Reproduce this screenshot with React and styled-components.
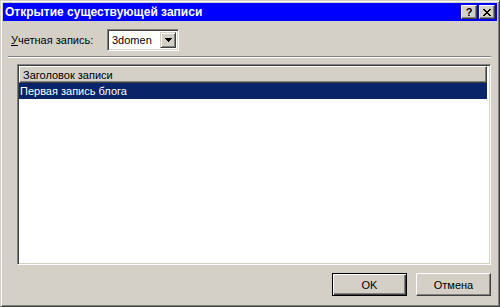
import React from "react";
import styled, { createGlobalStyle } from "styled-components";

const Global = createGlobalStyle`
  html, body { margin: 0; padding: 0; background: #D4D0C8; }
  * { box-sizing: border-box; }
  body { font-family: "Liberation Sans", Arial, sans-serif; font-size: 11px; color: #000; }
`;

const Window = styled.div`
  width: 500px;
  height: 307px;
  background: #D4D0C8;
  border: 1px solid;
  border-color: #D4D0C8 #404040 #404040 #D4D0C8;
  box-shadow: inset 1px 1px #fff, inset -1px -1px #808080;
  padding: 2px;
  display: flex;
  flex-direction: column;
`;

const TitleBar = styled.div`
  height: 18px;
  background: #0000ff;
  display: flex;
  align-items: center;
  padding: 0 2px 0 2px;
  flex-shrink: 0;
`;

const TitleText = styled.div`
  flex: 1;
  color: #fff;
  font-weight: bold;
  font-size: 12px;
  white-space: nowrap;
`;

const CaptionButton = styled.button`
  width: 16px;
  height: 14px;
  padding: 0;
  margin-left: ${(p) => (p.$gap ? "2px" : "0")};
  background: #D4D0C8;
  border: 1px solid;
  border-color: #fff #404040 #404040 #fff;
  box-shadow: inset -1px -1px #808080;
  display: flex;
  align-items: center;
  justify-content: center;
  font-family: "Liberation Sans", Arial, sans-serif;
  font-weight: bold;
  font-size: 11px;
  line-height: 1;
  color: #000;
`;

const Body = styled.div`
  flex: 1;
  display: flex;
  flex-direction: column;
  padding: 8px 6px 8px 5px;
`;

const AccountRow = styled.div`
  display: flex;
  align-items: center;
  height: 22px;
  padding-left: 3px;
`;

const Label = styled.label`
  width: 96px;
  white-space: nowrap;
`;

const Combo = styled.div`
  width: 72px;
  height: 22px;
  background: #fff;
  border: 1px solid;
  border-color: #808080 #fff #fff #808080;
  box-shadow: inset 1px 1px #404040, inset -1px -1px #D4D0C8;
  padding: 2px;
  display: flex;
  align-items: center;
`;

const ComboText = styled.span`
  flex: 1;
  padding-left: 2px;
`;

const ComboArrow = styled.div`
  width: 16px;
  height: 16px;
  background: #D4D0C8;
  border: 1px solid;
  border-color: #D4D0C8 #404040 #404040 #D4D0C8;
  box-shadow: inset 1px 1px #fff, inset -1px -1px #808080;
  display: flex;
  align-items: center;
  justify-content: center;
`;

const Separator = styled.div`
  height: 2px;
  margin-top: 5px;
  border-top: 1px solid #808080;
  border-bottom: 1px solid #fff;
`;

const ListView = styled.div`
  margin: 6px 0 0 9px;
  height: 201px;
  background: #fff;
  border: 1px solid;
  border-color: #808080 #fff #fff #808080;
  box-shadow: inset 1px 1px #404040, inset -1px -1px #D4D0C8;
  padding: 1px 3px 1px 1px;
  display: flex;
  flex-direction: column;
`;

const Header = styled.div`
  height: 17px;
  background: #D4D0C8;
  border: 1px solid;
  border-color: #fff #404040 #404040 #fff;
  box-shadow: inset -1px -1px #808080;
  display: flex;
  align-items: center;
  padding-left: 3px;
`;

const Row = styled.div`
  height: 16px;
  display: flex;
  align-items: center;
  padding-left: 1px;
  background: ${(p) => (p.$selected ? "#0A246A" : "transparent")};
  color: ${(p) => (p.$selected ? "#fff" : "#000")};
`;

const Footer = styled.div`
  margin-top: 8px;
  display: flex;
  justify-content: flex-end;
  gap: 9px;
`;

const Button = styled.button`
  width: 75px;
  height: 23px;
  padding: 0;
  background: #D4D0C8;
  font-family: "Liberation Sans", Arial, sans-serif;
  font-size: 11px;
  color: #000;
  border: 1px solid;
  border-color: ${(p) => (p.$default ? "#000" : "#fff #404040 #404040 #fff")};
  box-shadow: ${(p) =>
    p.$default
      ? "inset 1px 1px #fff, inset -1px -1px #404040, inset -2px -2px #808080"
      : "inset -1px -1px #808080"};
`;

export default function App() {
  return (
    <>
      <Global />
      <Window>
        <TitleBar>
          <TitleText>Открытие существующей записи</TitleText>
          <CaptionButton>?</CaptionButton>
          <CaptionButton $gap>
            <svg width="8" height="7" viewBox="0 0 8 7" shapeRendering="crispEdges">
              <path d="M0 0h2v1h-2zM6 0h2v1h-2zM1 1h2v1h-2zM5 1h2v1h-2zM2 2h4v1h-4zM3 3h2v1h-2zM2 4h4v1h-4zM1 5h2v1h-2zM5 5h2v1h-2zM0 6h2v1h-2zM6 6h2v1h-2z" fill="#000" />
            </svg>
          </CaptionButton>
        </TitleBar>
        <Body>
          <AccountRow>
            <Label>
              <u>У</u>четная запись:
            </Label>
            <Combo>
              <ComboText>3domen</ComboText>
              <ComboArrow>
                <svg width="7" height="4" viewBox="0 0 7 4" shapeRendering="crispEdges">
                  <path d="M0 0h7v1h-7zM1 1h5v1h-5zM2 2h3v1h-3zM3 3h1v1h-1z" fill="#000" />
                </svg>
              </ComboArrow>
            </Combo>
          </AccountRow>
          <Separator />
          <ListView>
            <Header>Заголовок записи</Header>
            <Row $selected>Первая запись блога</Row>
          </ListView>
          <Footer>
            <Button $default>OK</Button>
            <Button>Отмена</Button>
          </Footer>
        </Body>
      </Window>
    </>
  );
}
